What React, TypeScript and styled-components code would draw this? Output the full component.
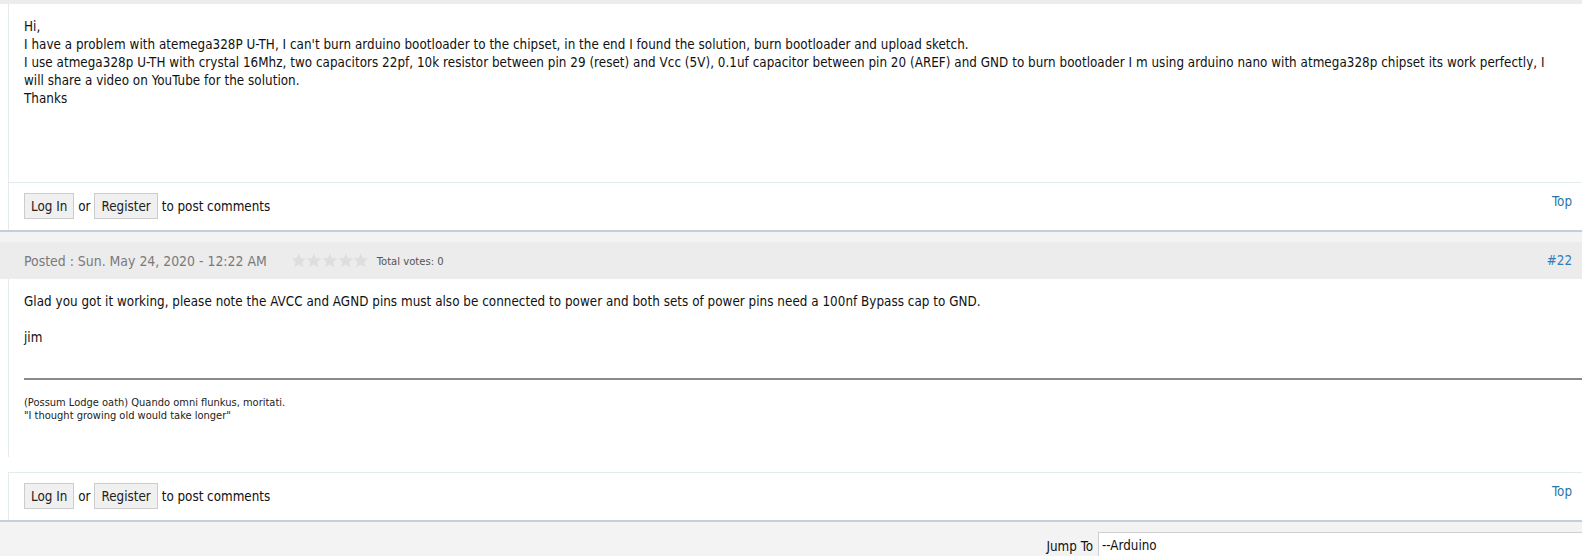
import React from "react";
import styled, { createGlobalStyle } from "styled-components";

const GlobalStyle = createGlobalStyle`
  html, body {
    margin: 0;
    padding: 0;
    overflow: hidden;
    background: #f3f3f3;
  }
  body {
    font-family: "DejaVu Sans Condensed", "DejaVu Sans", Verdana, sans-serif;
    font-size: 13.3px;
    color: #111;
  }
`;

const Page = styled.div`
  width: 1582px;
  height: 556px;
  overflow: hidden;
  background: #f3f3f3;
`;

const TopStrip = styled.div`
  height: 4px;
  background: #ececec;
`;

const Post = styled.div`
  background: #fff;
  border-bottom: 2px solid #c5cfd5;
`;

const HeaderGap = styled.div`
  height: 10px;
  background: #f3f3f3;
`;

const PostHeader = styled.div`
  height: 37px;
  background: #ececec;
  display: flex;
  align-items: center;
  padding: 0 10px 0 24px;
  color: #777;
`;

const PostedDate = styled.span`
  color: #7a7a7a;
  font-size: 13.9px;
`;

const Stars = styled.div`
  display: flex;
  margin-left: 24px;
`;

const Votes = styled.span`
  font-size: 11.2px;
  color: #555;
  margin-left: 8px;
  margin-top: 1px;
`;

const PostNumber = styled.a`
  margin-left: auto;
  color: #2f7fbf;
  text-decoration: none;
`;

const PostBody = styled.div<{ $minHeight: number }>`
  margin-left: 8px;
  border-left: 1px solid #e3ebef;
  padding: 14px 10px 0 15px;
  min-height: ${(p) => p.$minHeight}px;
  box-sizing: border-box;
  line-height: 18px;
  letter-spacing: 0.04px;
`;

const Para = styled.div`
  line-height: 18px;
`;

const Signature = styled.div`
  margin-top: 31px;
  margin-right: -10px;
  border-top: 2px solid #8a8a8a;
  padding-top: 16px;
  font-size: 11px;
  line-height: 13px;
  letter-spacing: 0;
  color: #222;
`;

const BodyGap = styled.div`
  height: 15px;
`;

const PostFooter = styled.div`
  margin-left: 8px;
  border-left: 1px solid #e3ebef;
  border-top: 1px solid #e3ebef;
  padding: 10px 10px 11px 15px;
  display: flex;
  align-items: flex-start;
`;

const Actions = styled.div`
  display: flex;
  align-items: center;
  gap: 4px;
`;

const Button = styled.span`
  display: inline-flex;
  align-items: center;
  height: 26px;
  box-sizing: border-box;
  padding: 0 6px;
  border: 1px solid #cccccc;
  background: #f0f0f0;
  color: #222;
`;

const Plain = styled.span`
  color: #111;
`;

const TopLink = styled.a`
  margin-left: auto;
  margin-top: 1px;
  color: #2a75a8;
  text-decoration: none;
`;

const JumpBar = styled.div`
  display: flex;
  justify-content: flex-end;
  align-items: flex-start;
  padding-top: 10px;
  gap: 5px;
`;

const JumpLabel = styled.span`
  margin-top: 7px;
  color: #111;
`;

const JumpSelect = styled.div`
  width: 484px;
  height: 30px;
  box-sizing: border-box;
  background: #fff;
  border: 1px solid #cfcfcf;
  border-right: none;
  padding: 5px 0 0 3px;
  color: #111;
`;

const Star = () => (
  <svg width="15.6" height="15" viewBox="0 0 24 23">
    <polygon
      points="12,0.5 15.2,8 23.3,8.6 17.1,13.9 19,21.9 12,17.6 5,21.9 6.9,13.9 0.7,8.6 8.8,8"
      fill="#dedede"
    />
  </svg>
);

const Footer = () => (
  <PostFooter>
    <Actions>
      <Button>Log In</Button>
      <Plain>or</Plain>
      <Button>Register</Button>
      <Plain>to post comments</Plain>
    </Actions>
    <TopLink>Top</TopLink>
  </PostFooter>
);

export default function App() {
  return (
    <Page>
      <GlobalStyle />
      <TopStrip />
      <Post>
        <PostBody $minHeight={178}>
          <Para>Hi,</Para>
          <Para>
            I have a problem with atemega328P U-TH, I can't burn arduino bootloader to the chipset, in the end I found the solution, burn bootloader and upload sketch.
          </Para>
          <Para>
            I use atmega328p U-TH with crystal 16Mhz, two capacitors 22pf, 10k resistor between pin 29 (reset) and Vcc (5V), 0.1uf capacitor between pin 20 (AREF) and GND to burn bootloader I m using arduino nano with atmega328p chipset its work perfectly, I
            <br />
            will share a video on YouTube for the solution.
          </Para>
          <Para>Thanks</Para>
        </PostBody>
        <Footer />
      </Post>
      <HeaderGap />
      <Post>
        <PostHeader>
          <PostedDate>Posted : Sun. May 24, 2020 - 12:22 AM</PostedDate>
          <Stars>
            <Star />
            <Star />
            <Star />
            <Star />
            <Star />
          </Stars>
          <Votes>Total votes: 0</Votes>
          <PostNumber>#22</PostNumber>
        </PostHeader>
        <PostBody $minHeight={178}>
          <Para>
            Glad you got it working, please note the AVCC and AGND pins must also be connected to power and both sets of power pins need a 100nf Bypass cap to GND.
          </Para>
          <Para>&nbsp;</Para>
          <Para>jim</Para>
          <Signature>
            (Possum Lodge oath) Quando omni flunkus, moritati.
            <br />
            "I thought growing old would take longer"
          </Signature>
        </PostBody>
        <BodyGap />
        <Footer />
      </Post>
      <JumpBar>
        <JumpLabel>Jump To</JumpLabel>
        <JumpSelect>--Arduino</JumpSelect>
      </JumpBar>
    </Page>
  );
}
